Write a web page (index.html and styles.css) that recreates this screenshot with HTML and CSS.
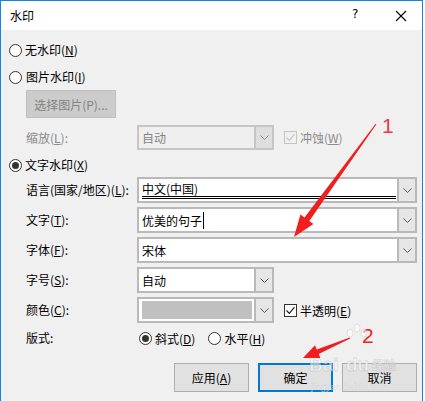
FILE: index.html
```html
<!DOCTYPE html>
<html lang="zh-CN">
<head>
<meta charset="utf-8">
<title>水印</title>
<link rel="stylesheet" href="styles.css">
</head>
<body>
<div class="win">
  <div class="titlebar">
    <span class="title">水印</span>
    <span class="help">?</span>
    <svg class="close" width="12" height="12" viewBox="0 0 12 12"><path d="M1 1 L11 11 M11 1 L1 11" stroke="#000" stroke-width="1.1" fill="none"/></svg>
  </div>
  <div class="content">
    <div class="opt r1"><span class="radio"></span><span class="otext">无水印(<u>N</u>)</span></div>
    <div class="opt r2"><span class="radio"></span><span class="otext t2">图片水印(<u>I</u>)</span></div>
    <div class="pickbtn">选择图片(P)...</div>
    <div class="frow scale">
      <span class="lbl dis">缩放(<u>L</u>):</span>
      <div class="combo short disabled"><div class="val">自动</div><div class="dd"><svg width="9" height="5" viewBox="0 0 9 5"><path d="M0.5 0.5 L4.5 4.5 L8.5 0.5" stroke="#8a8a8a" fill="none"/></svg></div></div>
      <span class="chk dis"><svg width="13" height="13" viewBox="0 0 13 13"><path d="M2.5 6.5 L5.3 9.3 L10.5 3.2" stroke="#c4c4c4" stroke-width="1.2" fill="none"/></svg></span>
      <span class="chktext dis">冲蚀(<u>W</u>)</span>
    </div>
    <div class="opt r3"><span class="radio on"></span><span class="otext">文字水印(<u>X</u>)</span></div>
    <div class="frow c1">
      <span class="lbl">语言(国家/地区)(<u>L</u>):</span>
      <div class="combo long"><div class="val"><span class="dbl">中文(中国)</span></div><div class="dd"><svg width="9" height="5" viewBox="0 0 9 5"><path d="M0.5 0.5 L4.5 4.5 L8.5 0.5" stroke="#555" fill="none"/></svg></div></div>
    </div>
    <div class="frow">
      <span class="lbl">文字(<u>T</u>):</span>
      <div class="combo long"><div class="val">优美的句子<span class="caret"></span></div><div class="dd"><svg width="9" height="5" viewBox="0 0 9 5"><path d="M0.5 0.5 L4.5 4.5 L8.5 0.5" stroke="#555" fill="none"/></svg></div></div>
    </div>
    <div class="frow">
      <span class="lbl">字体(<u>F</u>):</span>
      <div class="combo long"><div class="val">宋体</div><div class="dd"><svg width="9" height="5" viewBox="0 0 9 5"><path d="M0.5 0.5 L4.5 4.5 L8.5 0.5" stroke="#555" fill="none"/></svg></div></div>
    </div>
    <div class="frow">
      <span class="lbl">字号(<u>S</u>):</span>
      <div class="combo short"><div class="val">自动</div><div class="dd"><svg width="9" height="5" viewBox="0 0 9 5"><path d="M0.5 0.5 L4.5 4.5 L8.5 0.5" stroke="#555" fill="none"/></svg></div></div>
    </div>
    <div class="frow">
      <span class="lbl">颜色(<u>C</u>):</span>
      <div class="combo short"><div class="val swatchwrap"><div class="swatch"></div></div><div class="dd"><svg width="9" height="5" viewBox="0 0 9 5"><path d="M0.5 0.5 L4.5 4.5 L8.5 0.5" stroke="#555" fill="none"/></svg></div></div>
      <span class="chk"><svg width="13" height="13" viewBox="0 0 13 13"><path d="M2.5 6.5 L5.3 9.3 L10.5 3.2" stroke="#222" stroke-width="1.2" fill="none"/></svg></span>
      <span class="chktext">半透明(<u>E</u>)</span>
    </div>
    <div class="frow layout">
      <span class="lbl">版式:</span>
      <span class="radio on"></span><span class="rtext">斜式(<u>D</u>)</span>
      <span class="radio second"></span><span class="rtext">水平(<u>H</u>)</span>
    </div>
    <div class="buttons">
      <div class="btn">应用(<u>A</u>)</div>
      <div class="btn default">确定</div>
      <div class="btn">取消</div>
    </div>
  </div>
  <svg class="overlay" width="425" height="401" viewBox="0 0 425 401">
    <g fill="#f01e1e">
      <polygon points="376.4,124.3 375.6,123.7 304.5,217.4 300.4,214.5 294,237 313.4,223.9 309.3,221.0"/>
      <polygon points="350.2,338.5 349.8,337.5 316.7,349.4 315.0,345.3 303,358 320.4,358.1 318.7,354.0"/>
    </g>
    <text x="382" y="133" class="num n1">1</text>
    <text x="362" y="343" class="num">2</text>
    <g class="wm">
      <ellipse cx="350" cy="333" rx="3" ry="4"/>
      <ellipse cx="357" cy="328" rx="3" ry="4"/>
      <ellipse cx="364" cy="333" rx="3" ry="4"/>
      <text x="309" y="371" class="wmbig">Bai</text>
      <text x="346" y="371" class="wmbig">du</text>
      <text x="372" y="370" class="wmmid">经验</text>
      <text x="311" y="390" class="wmsmall">jingyan.baidu.com</text>
    </g>
  </svg>
</div>
</body>
</html>
```
FILE: styles.css
```css
html, body {
  margin: 0;
  padding: 0;
  background: #fff;
}
body {
  font-family: "Noto Sans CJK SC", "Microsoft YaHei", sans-serif;
  font-size: 12px;
  color: #000;
}
u { text-decoration: underline; text-underline-offset: 1px; }
.win {
  position: relative;
  width: 423px;
  height: 401px;
  box-sizing: border-box;
  border: 1px solid #1883d7;
  border-bottom: none;
  background: #f0f0f0;
  overflow: hidden;
}
.titlebar {
  height: 29px;
  background: #fff;
  display: flex;
  align-items: center;
  position: relative;
}
.title {
  margin-left: 9px;
  font-size: 12px;
  line-height: 16px;
}
.help {
  position: absolute;
  left: 351px;
  top: 6px;
  font-family: "DejaVu Sans", sans-serif;
  font-size: 12px;
}
.close {
  position: absolute;
  left: 394px;
  top: 9px;
}
.content {
  display: flex;
  flex-direction: column;
}
.opt {
  height: 18px;
  display: flex;
  align-items: center;
  padding-left: 8px;
}
.r1 { margin-top: 11px; }
.r2 { margin-top: 9px; }
.r3 { margin-top: 6px; }
.radio {
  width: 13px;
  height: 13px;
  box-sizing: border-box;
  border: 1px solid #333;
  border-radius: 50%;
  background: #fff;
  position: relative;
  flex: none;
}
.radio.on::after {
  content: "";
  position: absolute;
  left: 2px;
  top: 2px;
  width: 7px;
  height: 7px;
  border-radius: 50%;
  background: #333;
}
.otext { margin-left: 3px; line-height: 16px; }
.otext.t2 { margin-left: 4px; }
.pickbtn {
  margin-top: 4px;
  margin-left: 25px;
  width: 90px;
  height: 28px;
  box-sizing: border-box;
  border: 1px solid #bfbfbf;
  background: #cccccc;
  color: #838383;
  display: flex;
  align-items: center;
  justify-content: center;
}
.frow {
  display: flex;
  align-items: center;
  height: 26px;
  padding-left: 25px;
  margin-top: 4px;
}
.frow.scale { margin-top: 7px; height: 25px; }
.frow.c1 { margin-top: 3px; }
.lbl {
  width: 111px;
  flex: none;
  line-height: 16px;
}
.dis { color: #8a8a8a; }
.combo {
  height: 100%;
  box-sizing: border-box;
  border: 2px solid #b9b9b9;
  background: #fff;
  display: flex;
  flex: none;
}
.combo.short { width: 137px; }
.combo.long { width: 280px; }
.combo .val {
  flex: 1;
  display: flex;
  align-items: center;
  padding-left: 3px;
  position: relative;
  min-width: 0;
}
.combo .dd {
  width: 16px;
  flex: none;
  border-left: 2px solid #b9b9b9;
  background: #e6e6e6;
  display: flex;
  align-items: center;
  justify-content: center;
}
.combo.disabled { border-color: #c6c6c6; background: #efefef; }
.combo.disabled .val { color: #838383; }
.combo.disabled .dd { border-left-color: #c6c6c6; background: #dedede; }
.dbl {
  display: block;
  flex: 1;
  margin-right: 1px;
  padding-bottom: 0;
  line-height: 15px;
  border-bottom: 3px double #000;
}
.caret {
  display: inline-block;
  width: 1px;
  height: 17px;
  background: #000;
  margin-left: 1px;
}
.swatchwrap { padding: 2px; }
.swatch {
  flex: 1;
  height: 100%;
  background: #c0c0c0;
}
.chk {
  width: 13px;
  height: 13px;
  box-sizing: border-box;
  border: 1px solid #333;
  background: #fff;
  margin-left: 10px;
  flex: none;
  display: flex;
}
.chk svg { margin: -1px; }
.chk.dis { border-color: #c4c4c4; background: #f0f0f0; }
.chktext { margin-left: 3px; }
.frow.layout { height: 18px; margin-top: 6px; }
.layout .lbl { width: 113px; }
.rtext { margin-left: 3px; }
.radio.second { margin-left: 13px; }
.buttons {
  display: flex;
  justify-content: flex-end;
  gap: 9px;
  margin-top: 16px;
  padding-right: 5px;
}
.btn {
  width: 75px;
  height: 29px;
  box-sizing: border-box;
  border: 1px solid #adadad;
  background: #e1e1e1;
  display: flex;
  align-items: center;
  justify-content: center;
}
.btn.default { border: 2px solid #0078d7; }
.overlay {
  position: absolute;
  left: -1px;
  top: -1px;
  pointer-events: none;
}
.num {
  font-family: "Liberation Sans", sans-serif;
  font-size: 21px;
  fill: #f02020;
}
.num.n1 { fill: #ee3a46; }
.wm { fill: rgba(255,255,255,0.55); stroke: rgba(150,150,150,0.3); stroke-width: 0.8; }
.wmbig { font-family: "Liberation Sans", sans-serif; font-size: 19px; font-weight: bold; }
.wmmid { font-family: "Noto Sans CJK SC", sans-serif; font-size: 12px; font-weight: bold; }
.wmsmall { font-family: "Liberation Sans", sans-serif; font-size: 9.5px; stroke-width: 0.4; }
```
